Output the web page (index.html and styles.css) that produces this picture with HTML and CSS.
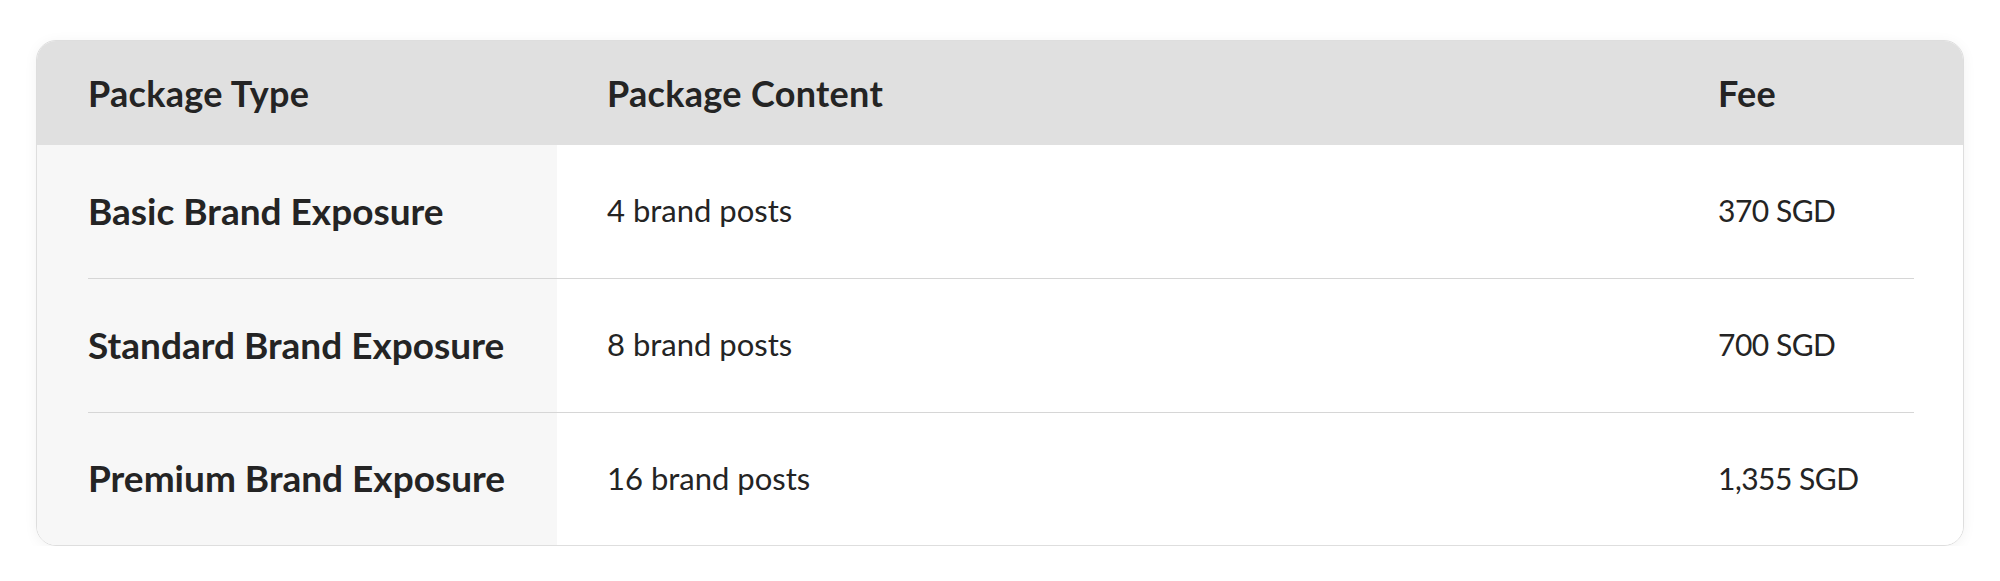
FILE: index.html
```html
<!DOCTYPE html>
<html lang="en">

<head>
     <meta charset="UTF-8">
     <meta name="viewport" content="width=device-width, initial-scale=1.0">
     <title>Brand Exposure Packages</title>
     <link rel="stylesheet" href="styles.css">
</head>

<body>
     <section class="packages">
          <div class="packages-head">
               <div class="cell">Package Type</div>
               <div class="cell col-content">Package Content</div>
               <div class="cell">Fee</div>
          </div>

          <div class="packages-body">
               <div class="package-row">
                    <div class="cell package-name">Basic Brand Exposure</div>
                    <div class="cell col-content">4 brand posts</div>
                    <div class="cell fee">370 SGD</div>
               </div>
               <div class="package-row">
                    <div class="cell package-name">Standard Brand Exposure</div>
                    <div class="cell col-content">8 brand posts</div>
                    <div class="cell fee">700 SGD</div>
               </div>
               <div class="package-row">
                    <div class="cell package-name">Premium Brand Exposure</div>
                    <div class="cell col-content">16 brand posts</div>
                    <div class="cell fee">1,355 SGD</div>
               </div>
          </div>
     </section>
</body>

</html>
```

FILE: styles.css
```css
body {
     font-family: Lato, "Liberation Sans", sans-serif;
     margin: 0;
     padding: 40px 36px 0;
     background-color: #fff;
     color: #242424;
}

.packages {
     border: 1px solid #dedede;
     border-radius: 20px;
     overflow: hidden;
     box-shadow: 0 2px 14px rgba(0, 0, 0, 0.05);
}

.packages-head,
.package-row {
     display: grid;
     grid-template-columns: 469px 1161px 1fr;
     align-items: center;
}

.packages-head {
     background-color: #e0e0e0;
     height: 104px;
     padding: 0 49px 0 51px;
     font-size: 36px;
     font-weight: bold;
     letter-spacing: 0.3px;
}

.packages-body {
     background: linear-gradient(to right, #f7f7f7 520px, #fff 520px);
}

.package-row {
     height: 134px;
     margin: 0 49px 0 51px;
     border-bottom: 1px solid #d6d6d6;
     font-size: 31px;
     padding-bottom: 3px;
     box-sizing: border-box;
}

.package-row:last-child {
     height: 132px;
     border-bottom: none;
}

.col-content {
     padding-left: 50px;
}

.package-name {
     font-size: 37px;
     font-weight: bold;
}

.fee {
     font-size: 30px;
     letter-spacing: -0.5px;
}
```
